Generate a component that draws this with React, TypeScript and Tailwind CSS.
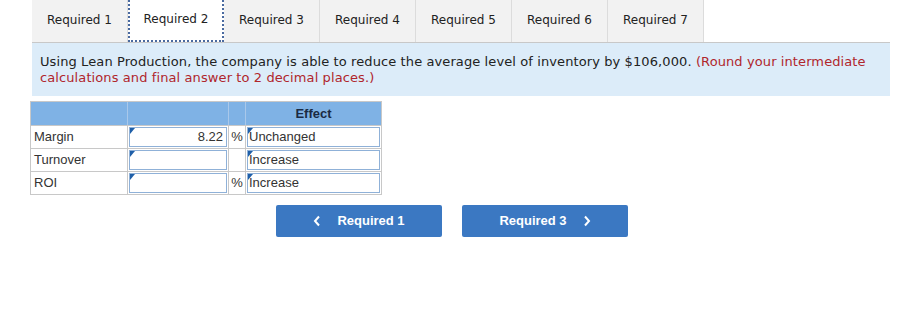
import React from "react";

const tabs = ["Required 1", "Required 2", "Required 3", "Required 4", "Required 5", "Required 6", "Required 7"];

function Marker() {
  return (
    <span className="absolute left-0 top-0 w-0 h-0 border-t-[6px] border-t-[#1f5fa8] border-r-[5px] border-r-transparent" />
  );
}

function Row({ label, value, pct, effect }: { label: string; value: string; pct: boolean; effect: string }) {
  return (
    <div className="flex h-[23px] border-t border-[#c8c8c8]">
      <div className="w-[97px] pl-[3px] flex items-center border-r border-[#c8c8c8] text-[#333]">{label}</div>
      <div className="w-[101px] p-[1px] border-r border-[#c8c8c8]">
        <div className="relative h-full border border-[#8fb1d8] bg-white flex items-center justify-end pr-[3px] text-[#333]">
          <Marker />
          {value}
        </div>
      </div>
      <div className="w-[17px] flex items-center justify-center text-[#333] border-r border-[#c8c8c8]">{pct ? "%" : ""}</div>
      <div className="flex-1 p-[1px]">
        <div className="relative h-full border border-[#8fb1d8] bg-white flex items-center pl-[1px] text-[#333]">
          <Marker />
          {effect}
        </div>
      </div>
    </div>
  );
}

export default function App() {
  return (
    <div className="w-[913px] h-[323px] bg-white pl-[32px]" style={{ fontFamily: "'DejaVu Sans', Verdana, sans-serif" }}>
      <div className="flex h-[42px]">
        {tabs.map((t, i) => (
          <div
            key={t}
            className={
              i === 1
                ? "w-[96px] h-full bg-white flex items-center justify-center pb-[2px] text-[12px] text-[#222] border-x-2 border-b-2 border-dotted border-[#4a6aa0]"
                : "w-[96px] h-full bg-[#f2f2f2] flex items-center justify-center pb-[2px] text-[12px] text-[#222] border-r border-[#dcdcdc]"
            }
          >
            {t}
          </div>
        ))}
      </div>
      <div className="w-[858px] h-[54px] bg-[#dcecf9] border-t border-[#c8c8c8] px-[8px] pt-[11px] text-[13px] leading-[16px] tracking-[0.1px] text-[#222]">
        <span>Using Lean Production, the company is able to reduce the average level of inventory by $106,000. </span>
        <span className="text-[#b0262c]">(Round your intermediate calculations and final answer to 2 decimal places.)</span>
      </div>
      <div
        className="ml-[-2px] mt-[5px] w-[352px] border border-[#c8c8c8] text-[13px]"
        style={{ fontFamily: "'Liberation Sans', Arial, sans-serif" }}
      >
        <div className="flex h-[23px] bg-[#7fb2e5]">
          <div className="w-[97px] border-r border-[#a9c8ea]" />
          <div className="w-[101px] border-r border-[#a9c8ea]" />
          <div className="w-[17px] border-r border-[#a9c8ea]" />
          <div className="flex-1 flex items-center justify-center font-bold text-[#1a2a44]">Effect</div>
        </div>
        <Row label="Margin" value="8.22" pct={true} effect="Unchanged" />
        <Row label="Turnover" value="" pct={false} effect="Increase" />
        <Row label="ROI" value="" pct={true} effect="Increase" />
      </div>
      <div className="flex mt-[10px] ml-[244px] gap-[20px]" style={{ fontFamily: "'Liberation Sans', Arial, sans-serif" }}>
        <div className="w-[166px] h-[32px] bg-[#3b78c2] rounded-[2px] flex items-center justify-center text-white font-bold text-[13px] gap-[16px]">
          <svg width="8" height="12" viewBox="0 0 8 12"><path d="M6 1.5 L2 6 L6 10.5" stroke="white" strokeWidth="2" fill="none" /></svg>
          <span>Required 1</span>
        </div>
        <div className="w-[166px] h-[32px] bg-[#3b78c2] rounded-[2px] flex items-center justify-center text-white font-bold text-[13px] gap-[16px]">
          <span>Required 3</span>
          <svg width="8" height="12" viewBox="0 0 8 12"><path d="M2 1.5 L6 6 L2 10.5" stroke="white" strokeWidth="2" fill="none" /></svg>
        </div>
      </div>
    </div>
  );
}
